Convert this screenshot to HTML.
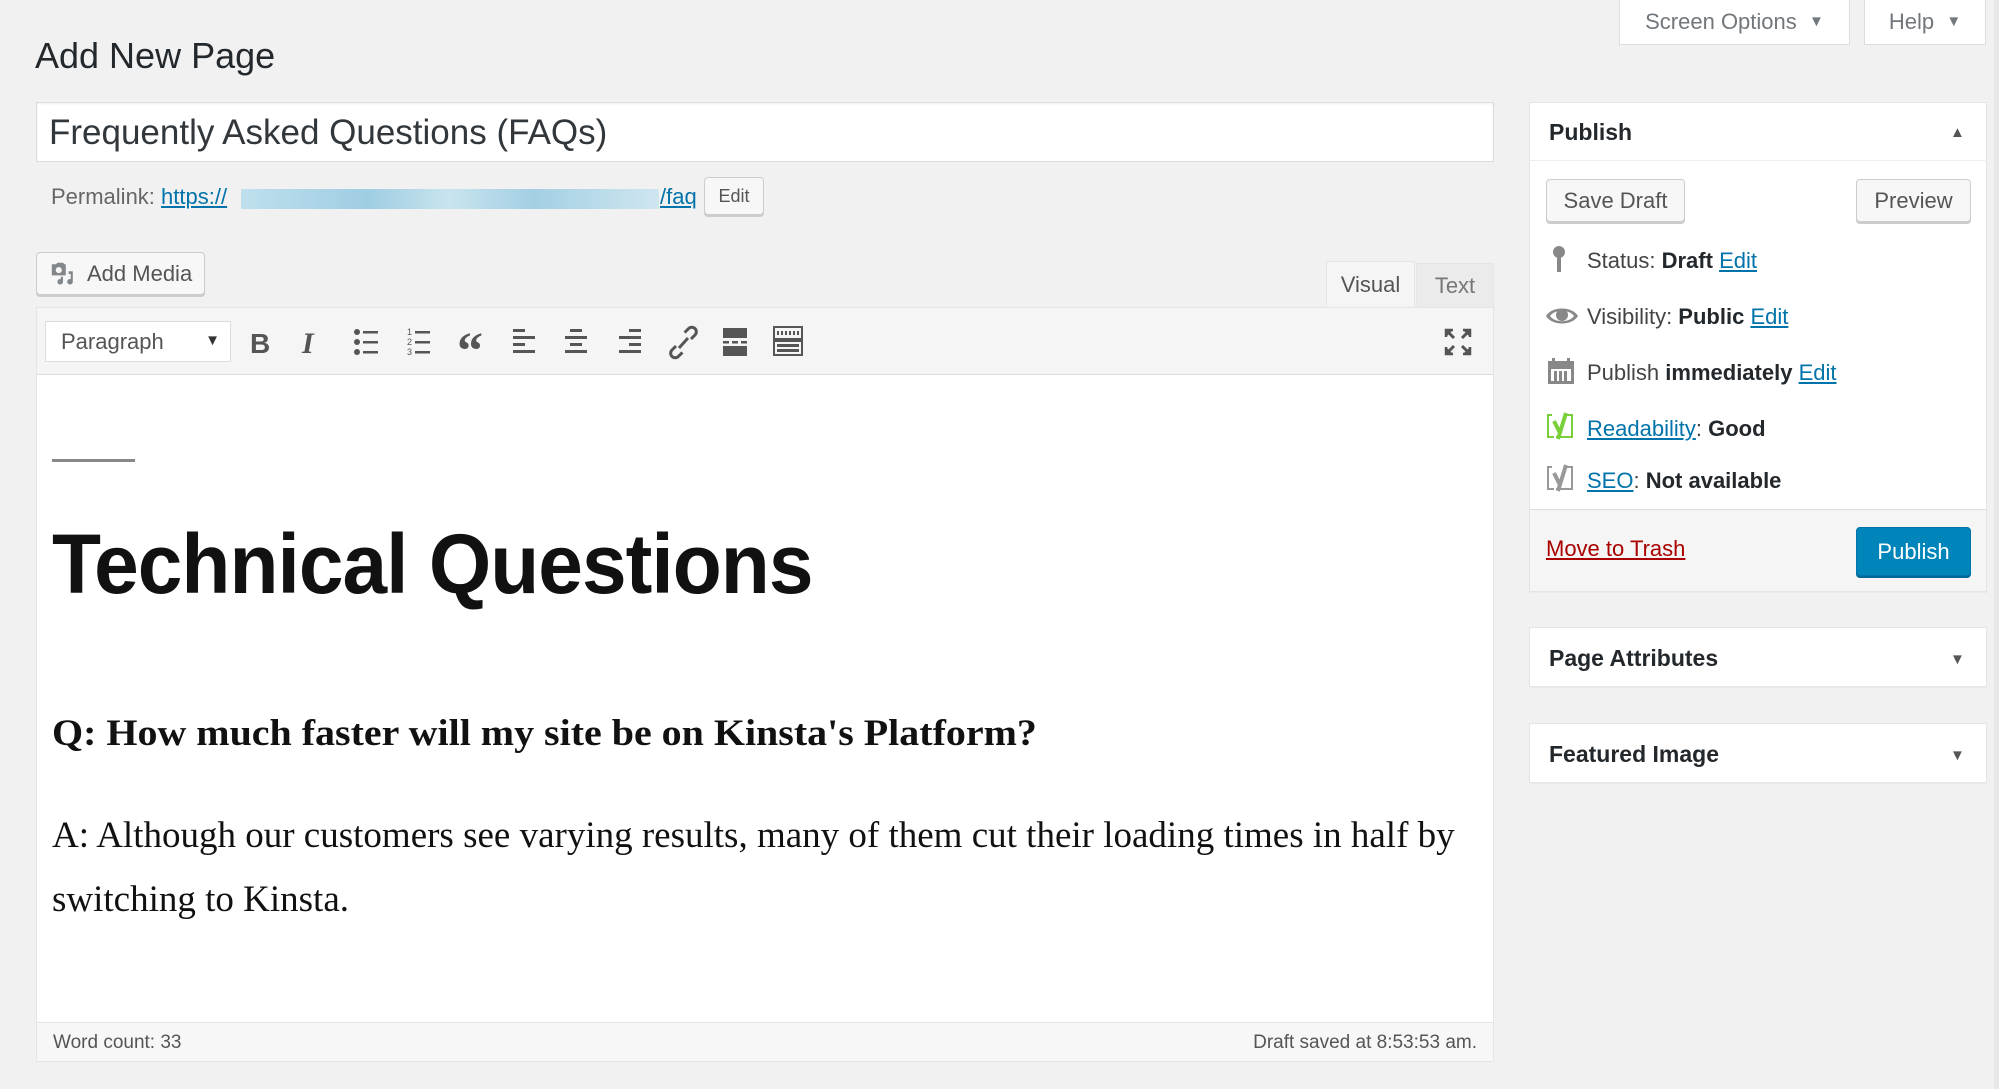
<!DOCTYPE html>
<html><head><meta charset="utf-8"><style>
*{box-sizing:border-box;margin:0;padding:0}
body{width:1999px;height:1089px;background:#f1f1f1;font-family:"Liberation Sans",sans-serif;color:#23282d;position:relative;overflow:hidden;font-size:21px}
.abs{position:absolute}
.btn{position:absolute;background:#f7f7f7;border:1px solid #ccc;border-radius:4px;box-shadow:0 2px 0 #ccc;color:#555;display:flex;align-items:center;justify-content:center}
a{color:#0073aa;text-decoration:underline}
.box{position:absolute;background:#fff;border:1px solid #e5e5e5;box-shadow:0 1px 1px rgba(0,0,0,.04)}
.row{position:absolute;left:1587px;color:#444;font-size:22px}
.row b{color:#23282d}
.ic{position:absolute;left:1545px}
</style></head><body>
<div class="abs" style="left:1619px;top:-2px;width:231px;height:47px;background:#fff;border:1px solid #ddd;display:flex;align-items:center;justify-content:center;color:#72777c;font-size:22px">Screen Options&nbsp;&nbsp;<span style="font-size:15px">▼</span></div>
<div class="abs" style="left:1864px;top:-2px;width:122px;height:47px;background:#fff;border:1px solid #ddd;display:flex;align-items:center;justify-content:center;color:#72777c;font-size:22px">Help&nbsp;&nbsp;<span style="font-size:15px">▼</span></div>
<div class="abs" style="left:1994px;top:0;width:5px;height:1089px;background:#e8e8e8"></div>

<div class="abs" style="left:35px;top:35px;font-size:36px;color:#23282d">Add New Page</div>

<div class="abs" style="left:36px;top:102px;width:1458px;height:60px;background:#fff;border:1px solid #ddd;box-shadow:inset 0 1px 2px rgba(0,0,0,.07)"></div>
<div class="abs" style="left:49px;top:113px;font-size:35px;color:#32373c">Frequently Asked Questions (FAQs)</div>

<div class="abs" style="left:51px;top:184px;font-size:22px;color:#666">Permalink: <a href="#" style="color:#0073aa">https://</a></div>
<div class="abs" style="left:241px;top:189px;width:418px;height:20px;background:linear-gradient(90deg,#bfe0ee,#9fcde2 30%,#c8e4ef 50%,#a3cfe3 70%,#cfe6f0)"></div>
<div class="abs" style="left:660px;top:184px;font-size:22px"><a href="#">/faq</a></div>
<div class="btn" style="left:704px;top:177px;width:60px;height:38px;font-size:18px">Edit</div>

<div class="btn" style="left:36px;top:252px;width:169px;height:43px;font-size:22px;justify-content:flex-start;padding-left:12px">
<svg width="28" height="28" viewBox="0 0 20 20" style="margin-right:10px"><path fill="#82878c" d="M2 3h3l1-1h4l1 1h1v8H2zM7 5a2.2 2.2 0 100 4.4A2.2 2.2 0 107 5zM14 8h3v7.5a2 2 0 11-1.5-1.9V10H14zM10 15.5a2 2 0 11-1.5-1.9V12H10z"/></svg>Add Media</div>

<div class="abs" style="left:1326px;top:261px;width:89px;height:46px;background:#f5f5f5;border:1px solid #e5e5e5;border-bottom:none;color:#555;font-size:22px;display:flex;align-items:center;justify-content:center">Visual</div>
<div class="abs" style="left:1416px;top:263px;width:78px;height:44px;background:#ebebeb;border:1px solid #e5e5e5;border-bottom:none;color:#777;font-size:22px;display:flex;align-items:center;justify-content:center">Text</div>

<div class="abs" style="left:36px;top:307px;width:1458px;height:755px;background:#fff;border:1px solid #e5e5e5"></div>
<div class="abs" style="left:36px;top:307px;width:1458px;height:68px;background:#f5f5f5;border:1px solid #e5e5e5;border-bottom:1px solid #ddd"></div>
<div class="abs" style="left:45px;top:321px;width:186px;height:41px;background:#fff;border:1px solid #ddd;color:#555;font-size:22px;padding:7px 15px">Paragraph<span style="position:absolute;right:10px;top:10px;font-size:15px;color:#333">▼</span></div>
<svg class="abs" style="left:240px;top:320px" width="580" height="44" viewBox="0 0 580 44" fill="#555">
<text x="10" y="33" font-family="Liberation Sans" font-weight="bold" font-size="28" fill="#555">B</text>
<text x="62" y="33" font-family="Liberation Serif" font-style="italic" font-weight="bold" font-size="30" fill="#555">I</text>
<g><circle cx="117" cy="12" r="3"/><circle cx="117" cy="22" r="3"/><circle cx="117" cy="32" r="3"/><rect x="123" y="11" width="15" height="2.5"/><rect x="123" y="21" width="15" height="2.5"/><rect x="123" y="31" width="15" height="2.5"/></g>
<g><text x="167" y="15" font-size="9" font-family="Liberation Sans">1</text><text x="167" y="25" font-size="9" font-family="Liberation Sans">2</text><text x="167" y="35" font-size="9" font-family="Liberation Sans">3</text><rect x="175" y="11" width="15" height="2.5"/><rect x="175" y="21" width="15" height="2.5"/><rect x="175" y="31" width="15" height="2.5"/></g>
<text x="217" y="48" font-family="Liberation Serif" font-weight="bold" font-size="52" fill="#555">“</text>
<g><rect x="273" y="9" width="12" height="3"/><rect x="273" y="16" width="22" height="3"/><rect x="273" y="23" width="12" height="3"/><rect x="273" y="30" width="22" height="3"/></g>
<g><rect x="330" y="9" width="12" height="3"/><rect x="325" y="16" width="22" height="3"/><rect x="330" y="23" width="12" height="3"/><rect x="325" y="30" width="22" height="3"/></g>
<g><rect x="389" y="9" width="12" height="3"/><rect x="379" y="16" width="22" height="3"/><rect x="389" y="23" width="12" height="3"/><rect x="379" y="30" width="22" height="3"/></g>
<path d="M439 28l9-10M436 26l-4 4a4.5 4.5 0 006.4 6.4l4-4M451 19l4-4a4.5 4.5 0 00-6.4-6.4l-4 4" stroke="#555" stroke-width="3" fill="none"/>
<g><rect x="483" y="8" width="24" height="10"/><rect x="483" y="21" width="6" height="2.5"/><rect x="492" y="21" width="6" height="2.5"/><rect x="501" y="21" width="6" height="2.5"/><rect x="483" y="26" width="24" height="10"/></g>
<g fill="none" stroke="#555" stroke-width="2"><rect x="534" y="7" width="28" height="12"/><rect x="534" y="21" width="28" height="14"/></g>
<g><rect x="537" y="11" width="2" height="4"/><rect x="541" y="11" width="2" height="4"/><rect x="545" y="11" width="2" height="4"/><rect x="549" y="11" width="2" height="4"/><rect x="553" y="11" width="2" height="4"/><rect x="557" y="11" width="2" height="4"/><rect x="537" y="24" width="22" height="3"/><rect x="537" y="29" width="22" height="3"/></g>
</svg>
<svg class="abs" style="left:1444px;top:328px" width="28" height="28" viewBox="0 0 28 28" fill="none" stroke="#555" stroke-width="3"><path d="M3 3l7 7M25 3l-7 7M3 25l7-7M25 25l-7-7"/><path d="M2 9V2h7M19 2h7v7M2 19v7h7M26 19v7h-7" fill="#555" stroke-width="2.5"/></svg>

<div class="abs" style="left:52px;top:459px;width:83px;height:3px;background:#888"></div>
<div class="abs" style="left:52px;top:516px;font-size:84px;font-weight:bold;color:#111;transform:scaleX(.955);transform-origin:left;letter-spacing:-1px;white-space:nowrap">Technical Questions</div>
<div class="abs" style="left:52px;top:712px;font-family:'Liberation Serif',serif;font-weight:bold;font-size:37px;color:#111;white-space:nowrap;transform:scaleX(1.08);transform-origin:left">Q: How much faster will my site be on Kinsta's Platform?</div>
<div class="abs" style="left:52px;top:804px;font-family:'Liberation Serif',serif;font-size:37px;line-height:64px;color:#111;white-space:nowrap">A: Although our customers see varying results, many of them cut their loading times in half by<br>switching to Kinsta.</div>

<div class="abs" style="left:36px;top:1022px;width:1458px;height:40px;background:#f7f7f7;border:1px solid #e5e5e5;font-size:19px;color:#555;padding:9px 16px">Word count: 33<span style="position:absolute;right:16px">Draft saved at 8:53:53 am.</span></div>

<!-- Publish box -->
<div class="box" style="left:1529px;top:102px;width:458px;height:490px"></div>
<div class="abs" style="left:1529px;top:160px;width:458px;height:1px;background:#eee"></div>
<div class="abs" style="left:1549px;top:119px;font-size:23px;font-weight:bold;color:#23282d">Publish</div>
<div class="abs" style="left:1950px;top:124px;font-size:15px;color:#555">▲</div>
<div class="btn" style="left:1546px;top:179px;width:139px;height:43px;font-size:22px">Save Draft</div>
<div class="btn" style="left:1856px;top:179px;width:115px;height:43px;font-size:22px">Preview</div>

<svg class="ic" style="top:245px;left:1551px" width="16" height="30" viewBox="0 0 16 30"><circle cx="8" cy="7" r="6" fill="#888"/><rect x="6" y="10" width="4" height="17" fill="#888"/></svg>
<div class="row" style="top:248px">Status: <b>Draft</b> <a href="#">Edit</a></div>
<svg class="ic" style="top:304px" width="34" height="24" viewBox="0 0 34 24"><path d="M1 12C7 2 27 2 33 12 27 22 7 22 1 12z" fill="#888"/><path d="M5 12C10 5 24 5 29 12 24 19 10 19 5 12z" fill="#fff"/><circle cx="17" cy="11" r="6" fill="#888"/></svg>
<div class="row" style="top:304px">Visibility: <b>Public</b> <a href="#">Edit</a></div>
<svg class="ic" style="top:357px;left:1547px" width="28" height="28" viewBox="0 0 28 28" fill="#888"><rect x="1" y="4" width="26" height="23"/><rect x="4" y="12" width="20" height="12" fill="#fff"/><rect x="7" y="14" width="3" height="10"/><rect x="12" y="14" width="3" height="10"/><rect x="17" y="14" width="3" height="10"/><rect x="5" y="1" width="3" height="6"/><rect x="20" y="1" width="3" height="6"/></svg>
<div class="row" style="top:360px">Publish <b>immediately</b> <a href="#">Edit</a></div>
<svg class="ic" style="top:411px;left:1546px" width="30" height="30" viewBox="0 0 30 30" fill="none"><path d="M6 4H2v22h6M20 4h6v22H10" stroke="#7ad03a" stroke-width="2"/><path d="M8 10l6 12M20 2l-8 26" stroke="#7ad03a" stroke-width="4"/></svg>
<div class="row" style="top:416px"><a href="#">Readability</a>: <b>Good</b></div>
<svg class="ic" style="top:463px;left:1546px" width="30" height="30" viewBox="0 0 30 30" fill="none"><path d="M6 4H2v22h6M20 4h6v22H10" stroke="#999" stroke-width="2"/><path d="M8 10l6 12M20 2l-8 26" stroke="#999" stroke-width="4"/></svg>
<div class="row" style="top:468px"><a href="#">SEO</a>: <b>Not available</b></div>

<div class="abs" style="left:1530px;top:509px;width:456px;height:82px;background:#f5f5f5;border-top:1px solid #ddd"></div>
<div class="abs" style="left:1546px;top:536px;font-size:22px"><a href="#" style="color:#a00">Move to Trash</a></div>
<div class="abs" style="left:1856px;top:527px;width:115px;height:49px;background:#0085ba;border:1px solid #0073aa;border-radius:4px;box-shadow:0 2px 0 #006799;color:#fff;font-size:22px;display:flex;align-items:center;justify-content:center">Publish</div>

<div class="box" style="left:1529px;top:627px;width:458px;height:60px"></div>
<div class="abs" style="left:1549px;top:645px;font-size:23px;font-weight:bold">Page Attributes</div>
<div class="abs" style="left:1950px;top:651px;font-size:15px;color:#555">▼</div>
<div class="box" style="left:1529px;top:723px;width:458px;height:60px"></div>
<div class="abs" style="left:1549px;top:741px;font-size:23px;font-weight:bold">Featured Image</div>
<div class="abs" style="left:1950px;top:747px;font-size:15px;color:#555">▼</div>
</body></html>
